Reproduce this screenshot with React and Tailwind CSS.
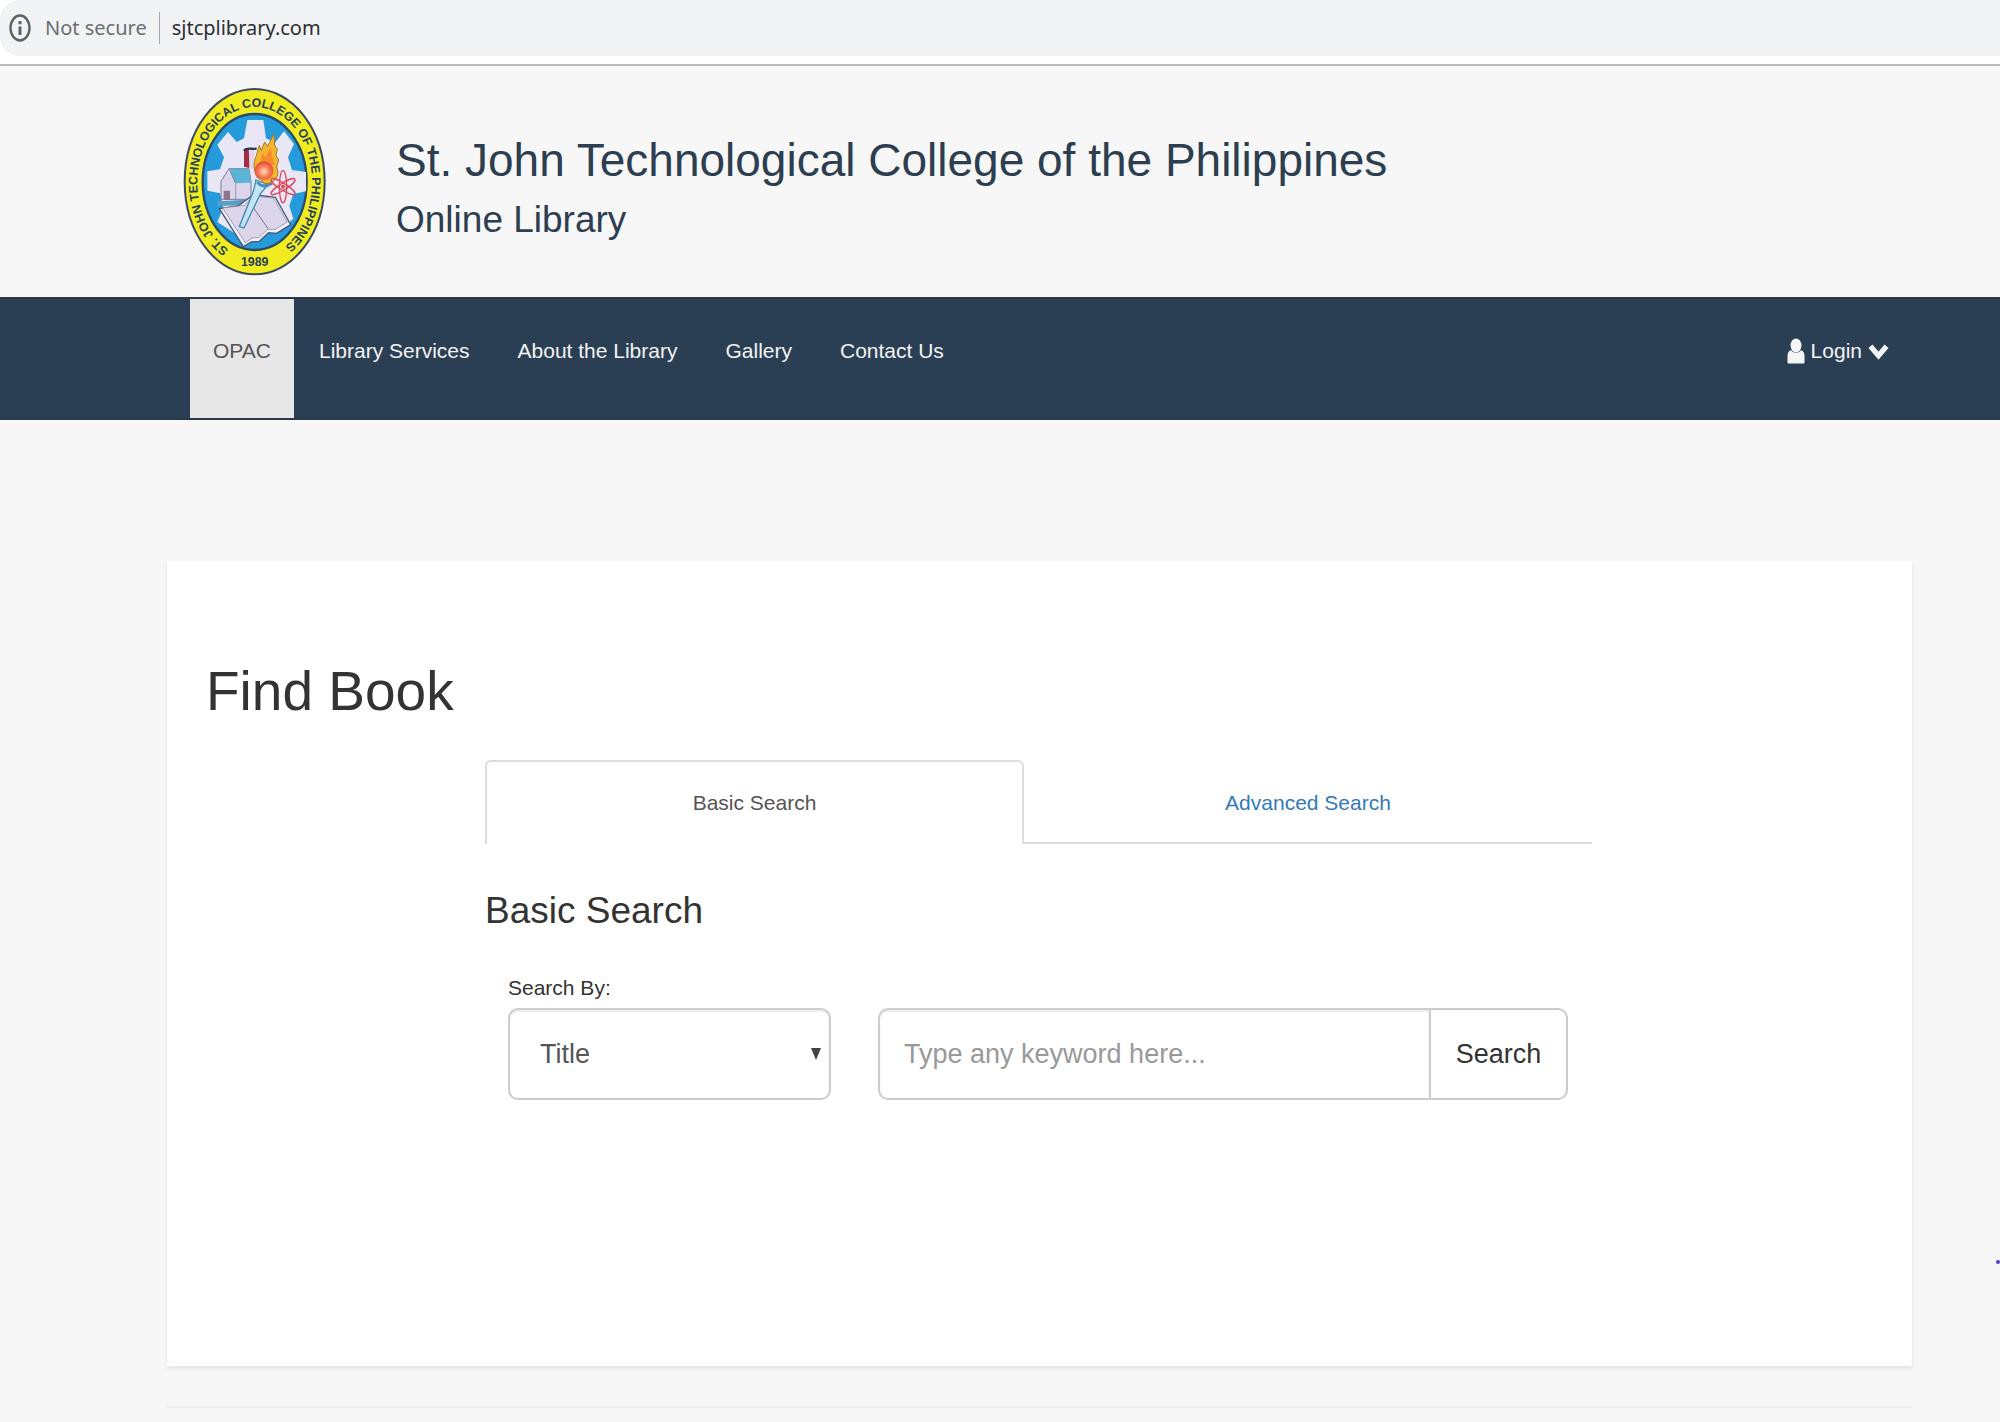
import React from "react";

const navLinks = ["OPAC", "Library Services", "About the Library", "Gallery", "Contact Us"];

function InfoIcon() {
  return (
    <svg viewBox="0 0 22 28" className="h-7 w-[22px]" fill="none" stroke="#5f6368" aria-hidden="true">
      <ellipse cx="11" cy="14" rx="9.5" ry="12.5" strokeWidth="2.4" />
      <path d="M11 12.5V21M11 7v3.2" strokeWidth="3" />
    </svg>
  );
}

function Seal() {
  return (
    <svg viewBox="0 0 570 660" className="h-[220px] w-[190px] shrink-0" role="img" aria-label="College seal">
      <defs>
        <path id="ring" d="M284 563A172 226 0 0 1 284 111A172 226 0 0 1 284 563" />
        <clipPath id="inner"><ellipse cx="284" cy="336" rx="156" ry="204" /></clipPath>
        <radialGradient id="glow" cx="50%" cy="55%" r="55%">
          <stop offset="0" stopColor="#fde3d0" />
          <stop offset="0.45" stopColor="#f98a5c" />
          <stop offset="1" stopColor="#e2443a" />
        </radialGradient>
      </defs>
      <ellipse cx="284" cy="335" rx="210" ry="278" fill="#f0ec1f" stroke="#3d4a63" strokeWidth="6" />
      <ellipse cx="284" cy="336" rx="156" ry="204" fill="#259bdb" stroke="#2b4a6b" strokeWidth="7" />
      <g clipPath="url(#inner)">
        <path
          fill="#e9e6f6"
          d="M252 205L262 150H310L318 205L345 218L372 184L402 222L384 262L396 300L438 306V364L400 372L388 408L400 446L372 470L330 470L240 500L200 474L172 456L190 412L180 370L142 362V304L180 298L192 262L172 224L204 186L230 216z"
        />
        <path d="M172 394l118-6-28 18-90 2z" fill="#5c9fc4" />
        <path d="M183 334l24-38 60 0 6 40v52h-90z" fill="#dcd6ea" stroke="#7b7a9d" strokeWidth="3" />
        <path d="M207 296h58l10 42-50 2z" fill="#59b4d6" />
        <path d="M207 296l20 44v50" fill="none" stroke="#7b7a9d" strokeWidth="2" />
        <path d="M191 362h19v28h-19z" fill="#8d7488" />
        <path d="M252 240l16-6 0 60-16-4z" fill="#a22c46" />
        <path d="M266 236h16v60h-12z" fill="#e4d6e6" />
        <path d="M252 242c8-10 20-4 38-6" stroke="#2b3555" strokeWidth="7" fill="none" />
        <path d="M178 416l72 114 24-14 24-2 28-26 24 2 42-26-46-82-66-8-46 34z" fill="#f0eef7" stroke="#47587b" strokeWidth="4" />
        <path d="M188 414l68 104 20-14 22-2 24-24 24 0 36-22-42-72-62-6-24 28z" fill="#ddd6ea" stroke="#7f7ea3" strokeWidth="2" />
        <path d="M278 410l46 66" stroke="#6f6e95" strokeWidth="3" />
        <path d="M288 330l36 14-22 26-50 104-14-4 42-106z" fill="#c4e4f4" stroke="#4589b4" strokeWidth="4" />
        <path d="M292 336c10 14 24 16 44 4" stroke="#468dbb" strokeWidth="9" fill="none" />
        <path
          d="M290 320c-10-24-10-46-2-60l10-34 6 16 10-26 8 14 20-38 2 34 8 12-4 18 8 14-6 20 4 16c0 24-22 38-40 34z"
          fill="#f5b62f" stroke="#a5792c" strokeWidth="3"
        />
        <path d="M300 282l8-34 8 14 16-30 6 32 6 22z" fill="#f78a2c" />
        <circle cx="312" cy="302" r="28" fill="url(#glow)" />
        <g fill="none" stroke="#df4a5b" strokeWidth="4">
          <ellipse cx="369" cy="350" rx="11" ry="48" />
          <ellipse cx="369" cy="350" rx="10" ry="42" transform="rotate(58 369 350)" />
          <ellipse cx="369" cy="350" rx="10" ry="42" transform="rotate(-58 369 350)" />
        </g>
        <circle cx="369" cy="350" r="6" fill="#df4a5b" />
      </g>
      <text fontFamily="'Liberation Sans', sans-serif" fontWeight="700" fontSize="37" fill="#26415c">
        <textPath href="#ring" startOffset="82">ST. JOHN TECHNOLOGICAL COLLEGE OF THE PHILIPPINES</textPath>
      </text>
      <text x="284" y="589" textAnchor="middle" fontFamily="'Liberation Sans', sans-serif" fontWeight="700" fontSize="37" fill="#26415c">1989</text>
    </svg>
  );
}

function UserIcon() {
  return (
    <svg viewBox="0 0 18 26" className="h-[26px] w-[18px]" fill="#f5f5f5" aria-hidden="true">
      <ellipse cx="9" cy="7.500" rx="5.500" ry="7" />
      <path d="M4 12C1.500 13 .5 15 .5 18v6.500q0 1 1 1h15q1 0 1-1V18c0-3-1-5-3.500-6C12.500 15.500 5.500 15.500 4 12z" />
    </svg>
  );
}

function ChevronIcon() {
  return (
    <svg viewBox="0 0 22 18" className="h-[17px] w-[21px]" fill="none" stroke="#f5f5f5" strokeWidth="5.500" aria-hidden="true">
      <path d="M2.500 3.500l8.500 10L19.500 3.500" />
    </svg>
  );
}

export default function App() {
  return (
    <div className="relative min-h-screen overflow-hidden bg-[#f7f7f7] font-['Liberation_Sans',Arial,sans-serif] text-[21px] leading-10 text-[#333333]">
      <div className="border-b-2 border-[#b8babb] bg-white pb-2">
        <div className="flex h-14 items-center rounded-l-[20px] bg-[#f1f3f4] pl-[9px] font-['Noto_Sans',sans-serif] text-[20px]">
          <InfoIcon />
          <span className="ml-3.5 text-[#6b6e72]">Not secure</span>
          <span className="mx-3 h-8 w-px bg-[#a5a8ab]" />
          <span className="text-[#2c2f33]">sjtcplibrary.com</span>
        </div>
      </div>

      <header className="flex items-start pt-1 pb-[7px] pl-40 text-[#2c3e50]">
        <Seal />
        <div className="pt-14 pl-[46px]">
          <h1 className="text-[46px] leading-[68px]">St. John Technological College of the Philippines</h1>
          <p className="text-[37px] leading-[52px]">Online Library</p>
        </div>
      </header>

      <nav className="flex h-[123px] items-stretch gap-0.5 border-y-2 border-[#2a394a] bg-[#2b3f54] pr-[111px] pl-[190px] text-[#f3f3f3]">
        {navLinks.map((label, i) => (
          <a
            key={label}
            href="#"
            aria-current={i === 0 ? "page" : undefined}
            className={i === 0 ? "bg-[#e7e7e7] px-[23px] pt-8 text-[#555555]" : "px-[23px] pt-8"}
          >
            {label}
          </a>
        ))}
        <button type="button" className="ml-auto flex items-center gap-1.5 self-start pt-8">
          <UserIcon />
          Login
          <ChevronIcon />
        </button>
      </nav>

      <main className="mt-[141px] mr-[88px] ml-[167px]">
        <section className="bg-white pt-[90px] pr-[320px] pb-[266px] pl-[39px] shadow-[0_2px_4px_rgba(0,0,0,0.09)]">
          <h2 className="text-[55px] leading-[80px]">Find Book</h2>
          <div className="mt-[29px] ml-[279px]">
            <div role="tablist" className="flex h-[84px]">
              <button type="button" role="tab" aria-selected="true" className="w-[539px] rounded-t-md border-2 border-b-0 border-[#dddddd] text-[#555555]">
                Basic Search
              </button>
              <button type="button" role="tab" aria-selected="false" className="flex-1 border-b-2 border-[#dddddd] pt-1 text-[#337ab7]">
                Advanced Search
              </button>
            </div>
            <h3 className="mt-10 text-[37px] leading-[54px]">Basic Search</h3>
            <form className="mt-[30px] flex items-end gap-[47px] pr-6 pl-[23px]">
              <div className="w-[323px]">
                <label htmlFor="field" className="block">Search By:</label>
                <div className="relative">
                  <select id="field" className="block h-[92px] w-full appearance-none rounded-[10px] border-2 border-[#cccccc] bg-white pl-[30px] text-[27px] text-[#555555] shadow-[inset_0_2px_2px_rgba(0,0,0,0.075)]">
                    <option>Title</option>
                    <option>Author</option>
                    <option>Subject</option>
                  </select>
                  <svg viewBox="0 0 10 12" className="pointer-events-none absolute top-10 right-2.5 h-3 w-2.5" fill="#444444" aria-hidden="true">
                    <path d="M0 0h10L5 12z" />
                  </svg>
                </div>
              </div>
              <div className="flex h-[92px] flex-1">
                <input
                  type="text"
                  aria-label="Keyword"
                  placeholder="Type any keyword here..."
                  className="min-w-0 flex-1 rounded-l-[10px] border-2 border-r-0 border-[#cccccc] bg-white pl-6 text-[27px] shadow-[inset_0_2px_2px_rgba(0,0,0,0.075)] placeholder:text-[#999999]"
                />
                <button type="submit" className="w-[139px] rounded-r-[10px] border-2 border-[#cccccc] bg-white text-[27px]">
                  Search
                </button>
              </div>
            </form>
          </div>
        </section>
        <hr className="mt-10 border-t-2 border-[#eeeeee]" />
      </main>
      <span className="absolute top-[1260px] right-0 size-1 rounded-full bg-[#4a3fd6]" />
    </div>
  );
}
